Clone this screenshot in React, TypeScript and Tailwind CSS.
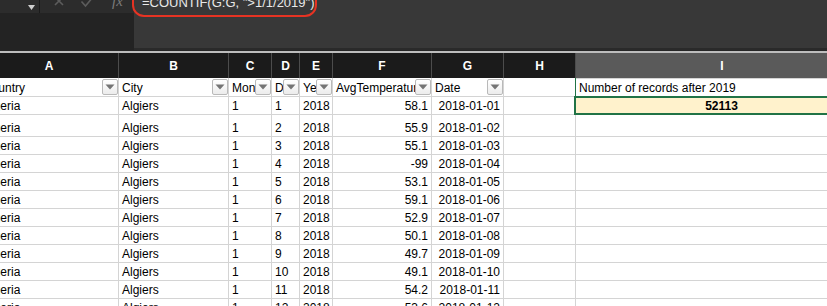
import React from "react";
import clsx from "clsx";

type Rec = { day: number; temp: string; tall?: boolean };

const records: Rec[] = [
  { day: 1, temp: "58.1" },
  { day: 2, temp: "55.9", tall: true },
  { day: 3, temp: "55.1" },
  { day: 4, temp: "-99" },
  { day: 5, temp: "53.1" },
  { day: 6, temp: "59.1" },
  { day: 7, temp: "52.9" },
  { day: 8, temp: "50.1" },
  { day: 9, temp: "49.7" },
  { day: 10, temp: "49.1" },
  { day: 11, temp: "54.2" },
  { day: 12, temp: "53.6" },
];

const letters = [
  { l: "B", w: "w-[110px]" },
  { l: "C", w: "w-[43px]" },
  { l: "D", w: "w-[28px]" },
  { l: "E", w: "w-[33px]" },
  { l: "F", w: "w-[99px]" },
  { l: "G", w: "w-[72px]" },
  { l: "H", w: "w-[72px]" },
];

function FilterButton() {
  return (
    <div className="mb-[1px] flex h-[16px] w-[16px] shrink-0 items-center justify-center rounded-[2px] border border-[#b9b9b9] bg-gradient-to-b from-white to-[#ececec]">
      <svg width="10" height="6" viewBox="0 0 10 6">
        <path d="M0.5 0.5 L9.5 0.5 L5 5.5 Z" fill="#747474" />
      </svg>
    </div>
  );
}

function FilterCell({ w, label, shift }: { w: string; label: string; shift?: boolean }) {
  return (
    <div className={clsx("flex shrink-0 items-end overflow-hidden border-r border-[#d4d4d4]", w)}>
      <div className={clsx("min-w-0 flex-1 overflow-hidden whitespace-nowrap leading-[15px]", shift ? "-ml-[17px]" : "pl-[3px]")}>
        {label}
      </div>
      <FilterButton />
    </div>
  );
}

function Cell({ w, right, children, className }: { w: string; right?: boolean; children?: React.ReactNode; className?: string }) {
  return (
    <div
      className={clsx(
        "flex shrink-0 items-end overflow-hidden whitespace-nowrap border-r border-[#d4d4d4] px-[3px] leading-[15px]",
        right && "justify-end",
        w,
        className
      )}
    >
      {children}
    </div>
  );
}

export default function App() {
  return (
    <div className="relative h-[306px] w-[827px] overflow-hidden bg-white font-['Liberation_Sans',Arial,sans-serif] text-[12px] text-black">
      {/* formula bar */}
      <div className="flex h-[50px]">
        <div className="flex w-[134px] shrink-0 flex-col bg-[#232323]">
          <div className="flex h-[13px] bg-[#2c2c2c]">
            <div className="w-[40px] border-r border-[#1b1b1b] pl-[28px] pt-[5px]">
              <svg width="7" height="5" viewBox="0 0 7 5">
                <path d="M0 0 L7 0 L3.5 5 Z" fill="#cfcfcf" />
              </svg>
            </div>
            <div className="flex flex-1 items-start overflow-hidden">
              <svg className="-mt-[5px] ml-[13px] shrink-0" width="12" height="12" viewBox="0 0 12 12">
                <path d="M2 2 L10 10 M10 2 L2 10" stroke="#5c5c5c" strokeWidth="1.6" fill="none" />
              </svg>
              <svg className="-mt-[4px] ml-[15px] shrink-0" width="14" height="12" viewBox="0 0 14 12">
                <path d="M1.5 5.5 L5.5 10 L13 1" stroke="#5c5c5c" strokeWidth="1.6" fill="none" />
              </svg>
              <span className="-mt-[6px] ml-[18px] font-['Liberation_Serif',serif] text-[15px] italic leading-[15px] text-[#7b7b7b]">
                fx
              </span>
            </div>
          </div>
        </div>
        <div className="flex-1 border-b-2 border-[#2a2a2a] bg-[#383838] pl-[8px]">
          <div className="-mt-[4px] whitespace-pre text-[13px] leading-[13px] text-[#e8e8e8]">
            =COUNTIF(G:G, "&gt;1/1/2019")
          </div>
        </div>
      </div>
      <div className="h-[1px] bg-[#262626]" />
      <div className="h-[2px] bg-[#bdbdbd]" />

      {/* column letters */}
      <div className="flex h-[25px] bg-[#1b1b1b] text-[12px] font-bold text-white">
        <div className="w-[119px] shrink-0 overflow-hidden border-r border-[#4c4c4c]">
          <div className="-ml-[20px] flex h-full w-[138px] items-center justify-center">A</div>
        </div>
        {letters.map((c) => (
          <div key={c.l} className={clsx("flex shrink-0 items-center justify-center border-r border-[#4c4c4c]", c.w)}>
            {c.l}
          </div>
        ))}
        <div className="flex w-[292px] shrink-0 items-center justify-center bg-[#5a5a5a]">I</div>
      </div>

      {/* filter row */}
      <div className="flex h-[19px] border-b border-[#d4d4d4]">
        <FilterCell w="w-[119px]" label="Country" shift />
        <FilterCell w="w-[110px]" label="City" />
        <FilterCell w="w-[43px]" label="Month" />
        <FilterCell w="w-[28px]" label="Day" />
        <FilterCell w="w-[33px]" label="Year" />
        <FilterCell w="w-[99px]" label="AvgTemperature" />
        <FilterCell w="w-[72px]" label="Date" />
        <Cell w="w-[72px]" className="border-r-[#217346]" />
        <Cell w="w-[292px]" className="border-t border-[#217346]">
          Number of records after 2019
        </Cell>
      </div>

      {/* data rows */}
      {records.map((r) => (
        <div key={r.day} className={clsx("flex border-b border-[#d4d4d4]", r.tall ? "h-[22px]" : "h-[18px]")}>
          <Cell w="w-[119px]">
            <span className="-ml-[20px]">Algeria</span>
          </Cell>
          <Cell w="w-[110px]">Algiers</Cell>
          <Cell w="w-[43px]">1</Cell>
          <Cell w="w-[28px]" className="px-[2px]">
            {r.day}
          </Cell>
          <Cell w="w-[33px]">2018</Cell>
          <Cell w="w-[99px]" right>
            {r.temp}
          </Cell>
          <Cell w="w-[72px]" right>
            2018-01-{String(r.day).padStart(2, "0")}
          </Cell>
          <Cell w="w-[72px]" />
          {r.day === 1 ? (
            <Cell w="w-[292px]" className="relative justify-center overflow-visible bg-[#fff2cc] font-bold">
              52113
              <div className="absolute -left-[2px] -top-[1px] -bottom-[1px] right-0 border-2 border-[#217346]" />
            </Cell>
          ) : (
            <div className="w-[292px] shrink-0" />
          )}
        </div>
      ))}

      {/* annotation around the formula */}
      <div className="absolute left-[132px] top-[-20px] h-[37px] w-[185px] rounded-[12px] border-[2.5px] border-[#e63323]" />
    </div>
  );
}
